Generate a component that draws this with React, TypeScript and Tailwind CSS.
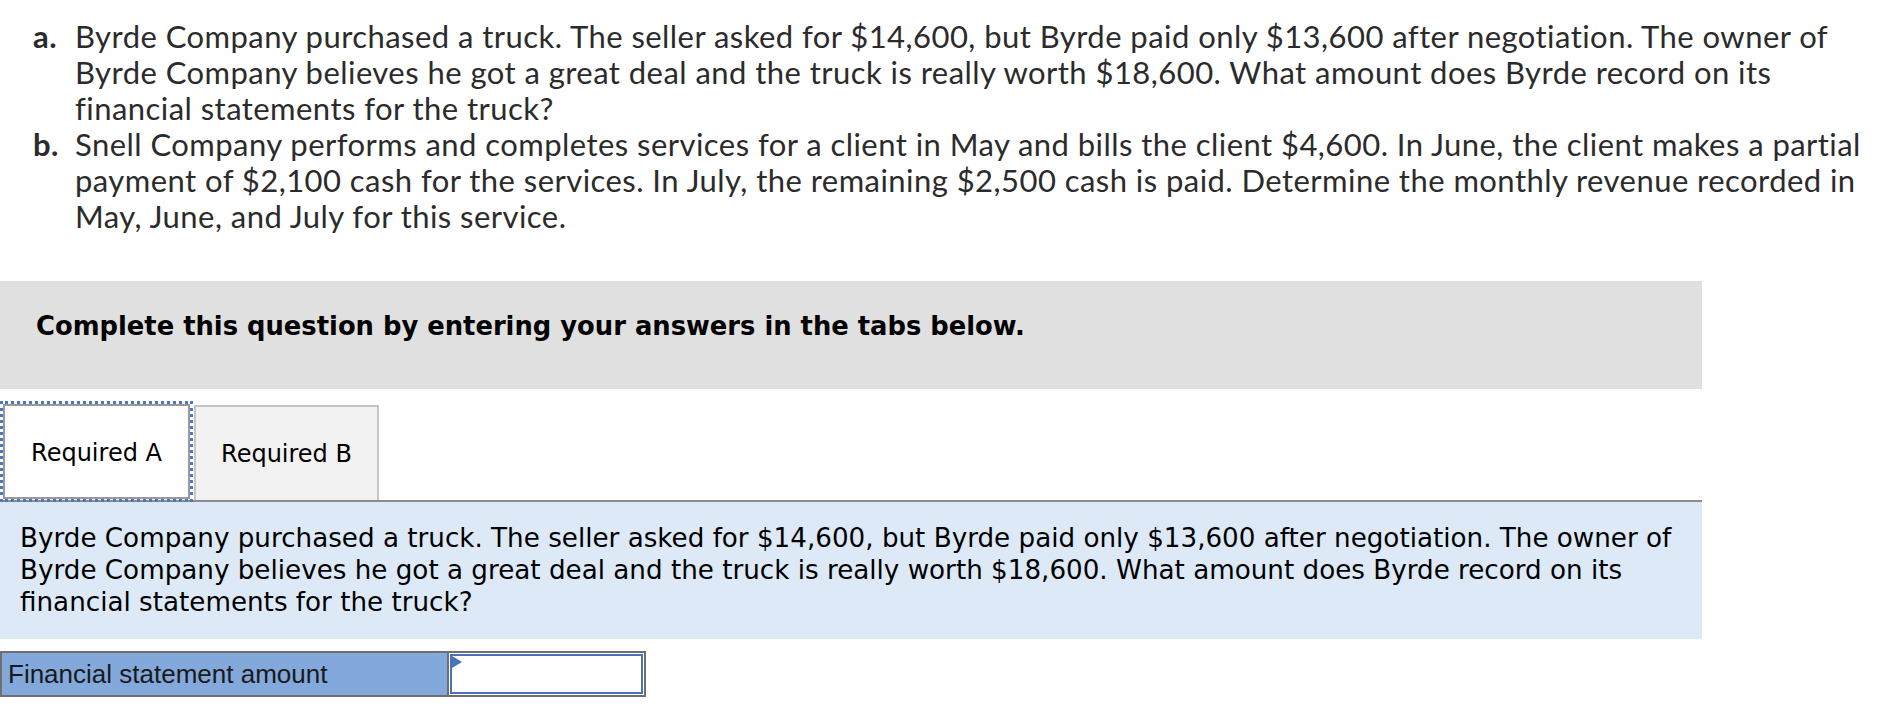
const tabs = ['Required A', 'Required B'];

export default function App() {
  return (
    <div className="relative h-[716px] w-[1894px] overflow-hidden bg-white">
      {/* Question text */}
      <div className="pt-[18px] pr-[16px] font-['Lato',sans-serif] text-[31px] leading-[36px] tracking-[0.45px] text-[#2b2b2b]">
        <div className="flex">
          <span className="w-[42px] shrink-0 pl-[33px] box-content font-bold">a.</span>
          <p>
            Byrde Company purchased a truck. The seller asked for $14,600, but Byrde paid only $13,600 after
            negotiation. The owner of Byrde Company believes he got a great deal and the truck is really worth
            $18,600. What amount does Byrde record on its financial statements for the truck?
          </p>
        </div>
        <div className="flex">
          <span className="w-[42px] shrink-0 pl-[33px] box-content font-bold">b.</span>
          <p>
            Snell Company performs and completes services for a client in May and bills the client $4,600. In June,
            the client makes a partial payment of $2,100 cash for the services. In July, the remaining $2,500 cash is
            paid. Determine the monthly revenue recorded in May, June, and July for this service.
          </p>
        </div>
      </div>

      {/* Instruction banner */}
      <div className="mt-[47px] h-[108px] w-[1702px] bg-[#e0e0e0] pl-[36px] pt-[30px] font-['DejaVu_Sans',Verdana,sans-serif] text-[25.8px] font-bold leading-[30px] text-black">
        Complete this question by entering your answers in the tabs below.
      </div>

      {/* Tabs */}
      <div className="mt-[12px] flex w-[1702px] items-end border-b-2 border-[#8c8c8c] font-['DejaVu_Sans',Verdana,sans-serif] text-[24px] text-black">
        <div className="-mb-[2px] h-[101px] w-[193px] border-[3px] border-dotted border-[#4a78c2]">
          <div className="flex h-full items-center justify-center border-2 border-[#999] bg-white pt-[3px]">{tabs[0]}</div>
        </div>
        <div className="ml-[1px] flex h-[95px] w-[185px] items-center justify-center border-2 border-b-0 border-[#c5c5c5] bg-[#f2f2f2]">
          {tabs[1]}
        </div>
      </div>

      {/* Active tab content */}
      <div className="h-[137px] w-[1702px] bg-[#dde9f7] px-[20px] pt-[20px] font-['DejaVu_Sans',Verdana,sans-serif] text-[26.2px] leading-[32px] text-black">
        Byrde Company purchased a truck. The seller asked for $14,600, but Byrde paid only $13,600 after negotiation.
        The owner of Byrde Company believes he got a great deal and the truck is really worth $18,600. What amount
        does Byrde record on its financial statements for the truck?
      </div>

      {/* Answer row */}
      <div className="mt-[12px] flex h-[46px] w-[646px]">
        <div className="flex w-[449px] items-center border-2 border-[#6f6f6f] bg-[#82a8dc] pl-[6px] font-['Liberation_Sans',Arial,sans-serif] text-[26px] text-[#1a1a1a]">
          Financial statement amount
        </div>
        <div className="relative flex-1 border-y-2 border-r-2 border-[#6f6f6f] bg-white p-[1px]">
          <div className="h-full border-2 border-[#4a72b8]" />
          <div className="absolute left-[3px] top-[3px] h-0 w-0 border-y-[6px] border-l-[10px] border-y-transparent border-l-[#4a72b8]" />
        </div>
      </div>
    </div>
  );
}
